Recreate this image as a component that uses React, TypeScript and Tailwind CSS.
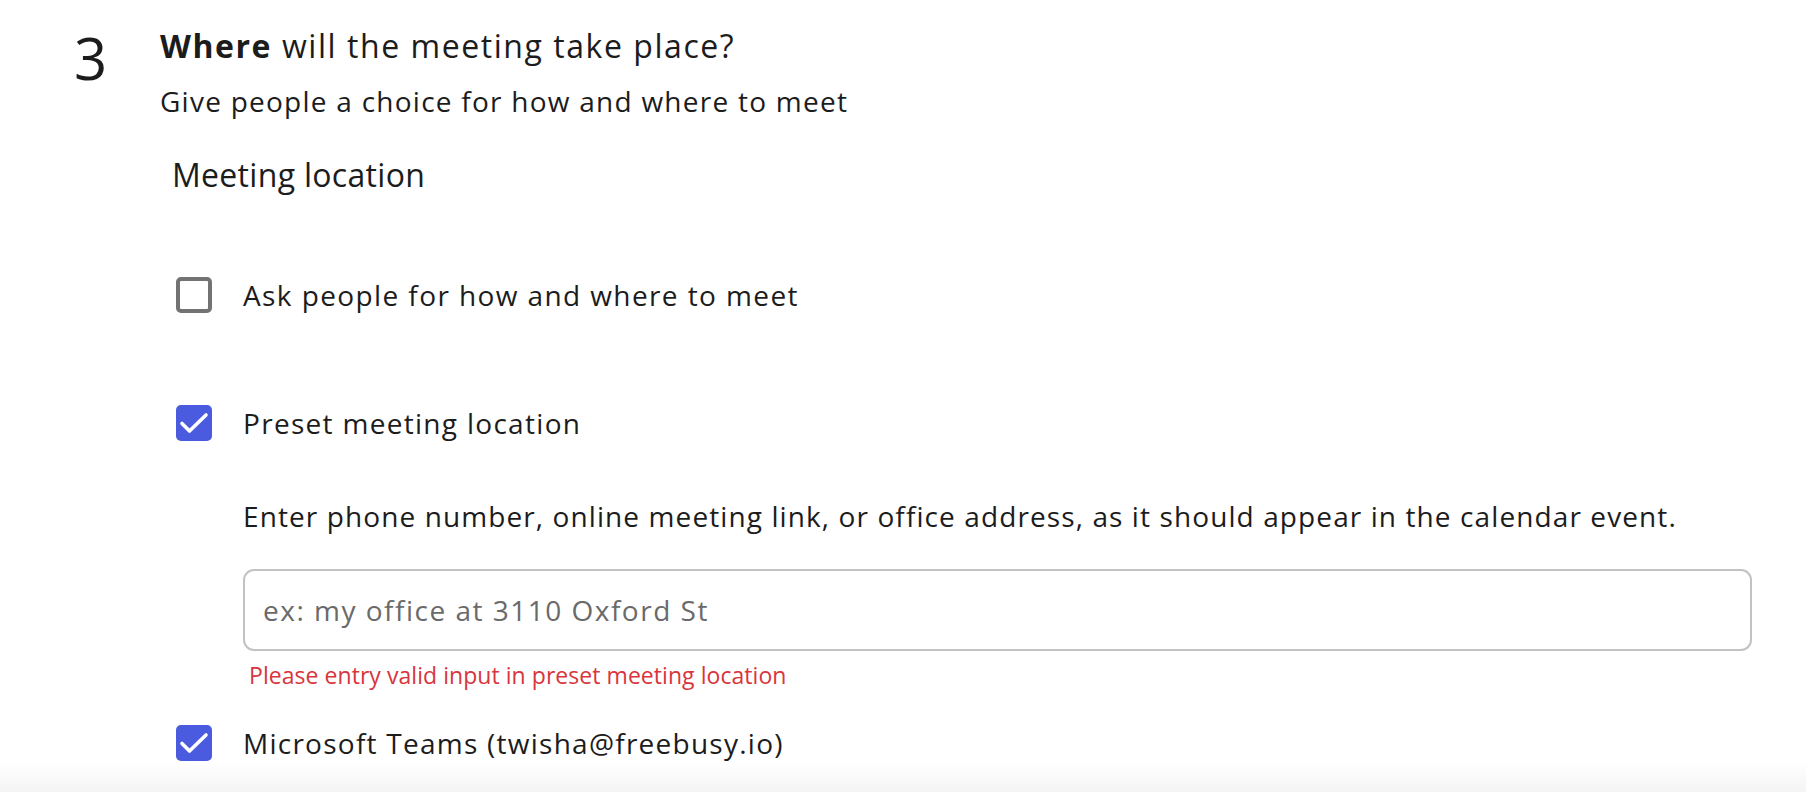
import React, { useState } from 'react';

const font = { fontFamily: '"Open Sans", "Noto Sans", sans-serif' };

const CheckBox: React.FC<{ checked: boolean; onChange: () => void }> = ({ checked, onChange }) => (
  <button
    type="button"
    onClick={onChange}
    className={
      checked
        ? 'w-[36px] h-[36px] shrink-0 rounded-[5px] bg-[#4a5be0]'
        : 'w-[36px] h-[36px] shrink-0 rounded-[5px] border-[4px] border-[#737373] bg-white'
    }
  >
    {checked && (
      <svg width="36" height="36" viewBox="0 0 36 36" fill="none" className="block">
        <path d="M6 18.5l7.5 7.5L30 10" stroke="white" strokeWidth="3.6" strokeLinecap="round" strokeLinejoin="round" />
      </svg>
    )}
  </button>
);

const App: React.FC = () => {
  const [askPeople, setAskPeople] = useState(false);
  const [preset, setPreset] = useState(true);
  const [teams, setTeams] = useState(true);
  const [location, setLocation] = useState('');

  return (
    <div className="relative w-full h-[792px] overflow-hidden bg-white text-[#1c1c1c]" style={font}>
      <div className="flex pt-[26px]">
        <div className="w-[160px] shrink-0 pl-[74px] pt-[3px] text-[58px] leading-[58px]">3</div>

        <div className="flex-1">
          <h2 className="text-[32px] leading-[40px] tracking-[1.55px]">
            <span className="font-bold">Where</span> will the meeting take place?
          </h2>
          <p className="mt-[17px] text-[28px] leading-[36px] tracking-[1.25px]">
            Give people a choice for how and where to meet
          </p>

          <p className="mt-[36px] ml-[12px] text-[32px] leading-[40px] tracking-[0.3px]">Meeting location</p>

          <div className="mt-[82px] ml-[16px] flex items-center gap-[31px]">
            <CheckBox checked={askPeople} onChange={() => setAskPeople(!askPeople)} />
            <span className="text-[28px] leading-[36px] tracking-[1.4px]">Ask people for how and where to meet</span>
          </div>

          <div className="mt-[92px] ml-[16px] flex items-center gap-[31px]">
            <CheckBox checked={preset} onChange={() => setPreset(!preset)} />
            <span className="text-[28px] leading-[36px] tracking-[1.3px]">Preset meeting location</span>
          </div>

          <div className="ml-[83px] w-[1509px]">
            <p className="mt-[57px] text-[28px] leading-[36px] tracking-[1.1px]">
              Enter phone number, online meeting link, or office address, as it should appear in the calendar event.
            </p>
            <input
              type="text"
              value={location}
              onChange={(e) => setLocation(e.target.value)}
              placeholder="ex: my office at 3110 Oxford St"
              className="mt-[35px] w-full h-[82px] rounded-[11px] border-2 border-[#c2c2c2] px-[18px] text-[28px] tracking-[1.5px] text-[#1c1c1c] placeholder:text-[#6a6a6a] outline-none"
              style={font}
            />
            <p className="mt-[8px] ml-[6px] text-[23px] leading-[32px] tracking-[0.05px] text-[#d8353c]">
              Please entry valid input in preset meeting location
            </p>
          </div>

          <div className="mt-[34px] ml-[16px] flex items-center gap-[31px]">
            <CheckBox checked={teams} onChange={() => setTeams(!teams)} />
            <span className="text-[28px] leading-[36px] tracking-[1.25px]">Microsoft Teams (twisha@freebusy.io)</span>
          </div>
        </div>
      </div>

      <div className="absolute left-0 right-0 bottom-0 h-[30px] bg-gradient-to-b from-white/0 to-[#f4f4f4]" />
    </div>
  );
};

export default App;
